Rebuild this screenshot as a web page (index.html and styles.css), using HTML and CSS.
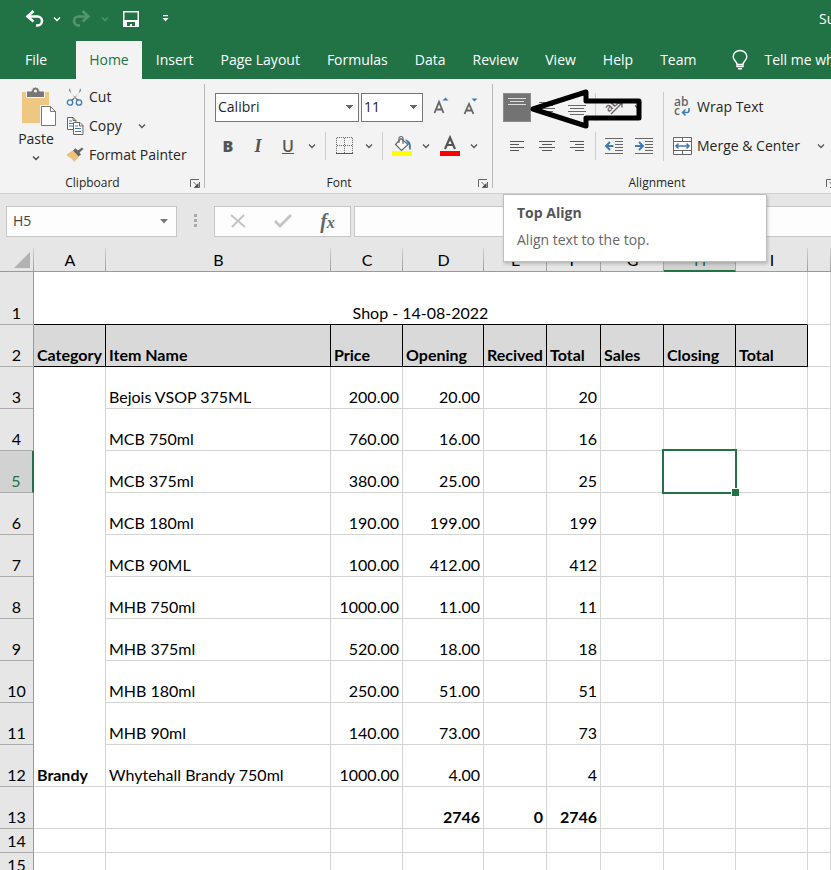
FILE: index.html
```html
<!DOCTYPE html>
<html lang="en">
<head>
<meta charset="utf-8">
<title>Shop stock sheet</title>
<link rel="stylesheet" href="styles.css">
</head>
<body>
<svg class="defs" aria-hidden="true">
  <symbol id="chev" viewBox="0 0 8 6"><path d="M1 1.500l3 3 3-3" fill="none" stroke="currentColor" stroke-width="1.300"/></symbol>
  <symbol id="launch" viewBox="0 0 10 9"><path d="M.5 8V.5H9M3.500 3l4 4M9.500 3v5.500H4" fill="none" stroke="#666"/><path d="M8.500 4v4h-4z" fill="#444"/></symbol>
</svg>

<header class="titlebar">
  <button class="qat undo" aria-label="Undo"><svg width="20" height="18" viewBox="0 0 20 18"><path d="M3 6.500h9.500a4.500 4.500 0 0 1 0 9H11" fill="none" stroke="#fff" stroke-width="2.600"/><path d="M8.500 1L2.500 6.500l6 5" fill="none" stroke="#fff" stroke-width="2.600"/></svg></button>
  <button class="qat drop" aria-label="Undo history"><svg width="8" height="6"><use href="#chev"/></svg></button>
  <button class="qat redo" aria-label="Redo"><svg width="20" height="18" viewBox="0 0 20 18"><path d="M17 6.500H7.500a4.500 4.500 0 0 0 0 9H9M11.500 1l6 5.500-6 5" fill="none" stroke="#549570" stroke-width="2.600"/></svg></button>
  <button class="qat drop dim" aria-label="Redo history"><svg width="8" height="6"><use href="#chev"/></svg></button>
  <button class="qat save" aria-label="Save"><svg width="16" height="16" viewBox="0 0 16 16"><path d="M0 0h16v16H0z" fill="#fff"/><path d="M1.500 1.500h13V9h-13zM4 11h8v4H9v-2H7v2H4z" fill="#217346"/></svg></button>
  <button class="qat more" aria-label="Customize toolbar"><svg width="7" height="7" viewBox="0 0 7 7"><path d="M1 0h5v1.200H1zM.5 3h6l-3 3.500z" fill="#fff"/></svg></button>
  <span class="doc">Su</span>
</header>

<nav class="tabs">
  <a class="tab file" href="#">File</a>
  <a class="tab on" href="#">Home</a>
  <a class="tab" href="#">Insert</a>
  <a class="tab" href="#">Page Layout</a>
  <a class="tab" href="#">Formulas</a>
  <a class="tab" href="#">Data</a>
  <a class="tab" href="#">Review</a>
  <a class="tab" href="#">View</a>
  <a class="tab" href="#">Help</a>
  <a class="tab" href="#">Team</a>
  <a class="tell" href="#"><svg width="16" height="20" viewBox="0 0 16 20"><path d="M5 14.500c0-3-3.800-4-3.800-7.700a6.800 6.300 0 0 1 13.600 0c0 3.700-3.800 4.700-3.800 7.700v2H5zM5 14.500h6M6 18.800h4" fill="none" stroke="#fff" stroke-width="1.400"/></svg>Tell me wh</a>
</nav>

<section class="ribbon">
  <div class="group">
    <div class="clip">
      <button class="paste"><svg width="36" height="40" viewBox="0 0 36 40"><path d="M4 5h27v31H4z" fill="#eec880"/><path d="M8.500 4h5a4 4 0 0 1 8 0h5v6.500h-18z" fill="#777" stroke="#f3f3f3"/><circle cx="17.500" cy="4" r="1.500" fill="#f3f3f3"/><path d="M23.500 19.500h9l5 5v14h-14z" fill="#fff" stroke="#f3f3f3" stroke-width="3"/><path d="M23.500 19.500h9l5 5v14h-14zM32.500 19.500v5h5" fill="#fff" stroke="#777"/></svg><span>Paste</span><svg width="8" height="6"><use href="#chev"/></svg></button>
      <div class="stack">
        <button class="cmd"><svg width="18" height="18" viewBox="0 0 18 18"><path d="M4 0c0 4 2 7 4.500 8.500L13 12l-1.500 1L3 2.500zM14 0c0 4-2 7-4.500 8.500L5 12l1.500 1L15 2.500z" fill="#666"/><circle cx="4" cy="14.500" r="2.700" fill="none" stroke="#3f7ab8" stroke-width="1.300"/><circle cx="13" cy="14.500" r="2.700" fill="none" stroke="#3f7ab8" stroke-width="1.300"/></svg>Cut</button>
        <div class="line"><button class="cmd"><svg width="18" height="18" viewBox="0 0 18 18"><path d="M1.500.5H7l3 3v9H1.500zM7 .5v3h3" fill="#fff" stroke="#666"/><path d="M3 4h3M3 6.500h4M3 9h4" stroke="#3f7ab8"/><path d="M7.500 5.500H14l3 3v9H7.500zM13.500 5.500v3.500H17" fill="#fff" stroke="#666"/><path d="M9 9h3M9 11.500h6M9 14.500h6" stroke="#3f7ab8"/></svg>Copy</button><button class="chev" aria-label="Copy options"><svg width="8" height="6"><use href="#chev"/></svg></button></div>
        <button class="cmd"><svg width="18" height="18" viewBox="0 0 18 18"><path d="M1 8l6-3.500L13 11l-5 5c-1.500-3-4-5-7-6z" fill="#eec27c"/><path d="M7 4.500l2.500-2.200 2.300 2.200L16 1.500 17.500 3l-4 3.500 1.500 2-2.500 2z" fill="#666"/></svg>Format Painter</button>
      </div>
    </div>
    <div class="caption"><span>Clipboard</span><button aria-label="Clipboard settings"><svg width="10" height="9"><use href="#launch"/></svg></button></div>
  </div>

  <div class="group font">
    <div class="rows">
      <div class="line pick">
        <select class="face" aria-label="Font"><option>Calibri</option></select>
        <select class="size" aria-label="Font size"><option>11</option></select>
        <button class="ico" aria-label="Increase font size"><svg width="20" height="20" viewBox="0 0 20 20"><path d="M4.500 16L9 5l4.500 11M6 12.500h6" fill="none" stroke="#666" stroke-width="1.800"/><path d="M12.500 3.500L15.500.5l3 3z" fill="#3f7ab8"/></svg></button>
        <button class="ico" aria-label="Decrease font size"><svg width="20" height="20" viewBox="0 0 20 20"><path d="M4.500 17L9 7l4.500 10M6 13.500h6" fill="none" stroke="#666" stroke-width="1.800"/><path d="M11.500 1.500l3 3 3-3z" fill="#3f7ab8"/></svg></button>
      </div>
      <div class="line">
        <button class="ico letter"><b>B</b></button>
        <button class="ico letter"><i>I</i></button>
        <button class="ico letter"><u>U</u></button>
        <button class="chev" aria-label="Underline options"><svg width="8" height="6"><use href="#chev"/></svg></button>
        <span class="bar"></span>
        <button class="ico" aria-label="Borders"><svg width="18" height="18" viewBox="0 0 18 18"><path d="M1 .5h16M1 8.500h16M.5 1v15M8.500 1v15M16.500 1v15" stroke="#666" stroke-dasharray="1 1"/><path d="M0 16.500h17" stroke="#555"/></svg></button>
        <button class="chev" aria-label="Border options"><svg width="8" height="6"><use href="#chev"/></svg></button>
        <span class="bar"></span>
        <button class="ico" aria-label="Fill color"><svg width="20" height="22" viewBox="0 0 20 22"><path d="M9 3.500l7 6-6.500 6-6-6z" fill="#fff" stroke="#666" stroke-width="1.200"/><path d="M7 8V3.500a2 2 0 0 1 4 0V9" fill="none" stroke="#666" stroke-width="1.200"/><path d="M13 4.500c4.500.5 7 4 5.500 10.500-1.500-.5-2-2-1.500-5z" fill="#3f7ab8"/><path d="M0 16h20v5H0z" fill="#ff0"/></svg></button>
        <button class="chev" aria-label="Fill options"><svg width="8" height="6"><use href="#chev"/></svg></button>
        <button class="ico" aria-label="Font color"><svg width="20" height="22" viewBox="0 0 20 22"><path d="M5 14L10 2.500 15 14M6.500 10h7" fill="none" stroke="#555" stroke-width="2.200"/><path d="M0 16h20v5H0z" fill="red"/></svg></button>
        <button class="chev" aria-label="Font color options"><svg width="8" height="6"><use href="#chev"/></svg></button>
      </div>
    </div>
    <div class="caption"><span>Font</span><button aria-label="Font settings"><svg width="10" height="9"><use href="#launch"/></svg></button></div>
  </div>

  <div class="group align">
    <div class="cols">
      <div class="rows">
        <div class="line">
          <button class="ico pressed" aria-label="Top Align"><svg width="18" height="18" viewBox="0 0 18 18"><path d="M0 .5h18M2 3.500h14M0 6.500h18" stroke="#ddd"/></svg></button>
          <button class="ico" aria-label="Middle Align"><svg width="18" height="18" viewBox="0 0 18 18"><path d="M1 4.500h16M3 7.500h12M1 10.500h16M3 13.500h12" stroke="#666"/></svg></button>
          <button class="ico" aria-label="Bottom Align"><svg width="18" height="18" viewBox="0 0 18 18"><path d="M0 7.500h18M2 10.500h14M0 13.500h18M2 16.500h14" stroke="#666"/></svg></button>
          <span class="bar"></span>
          <button class="ico" aria-label="Orientation"><svg width="22" height="20" viewBox="0 0 22 20"><text x="4" y="15" transform="rotate(-45 6 13)" class="ab">ab</text><path d="M8 17L19 6M14.500 6H19v4.500" fill="none" stroke="#666" stroke-width="1.400"/></svg></button>
          <button class="chev" aria-label="Orientation options"><svg width="8" height="6"><use href="#chev"/></svg></button>
        </div>
        <div class="line">
          <button class="ico" aria-label="Align left"><svg width="16" height="12" viewBox="0 0 16 12"><path d="M1 1.500h14M1 4.500h9M1 7.500h14M1 10.500h9" stroke="#555"/></svg></button>
          <button class="ico" aria-label="Center"><svg width="16" height="12" viewBox="0 0 16 12"><path d="M0 1.500h16M3 4.500h10M0 7.500h16M3 10.500h10" stroke="#555"/></svg></button>
          <button class="ico" aria-label="Align right"><svg width="16" height="12" viewBox="0 0 16 12"><path d="M1 1.500h14M6 4.500h9M1 7.500h14M6 10.500h9" stroke="#555"/></svg></button>
          <span class="bar"></span>
          <button class="ico" aria-label="Decrease indent"><svg width="18" height="16" viewBox="0 0 18 16"><path d="M0 .5h18M10 3.500h8M10 6.500h8M10 9.500h8M10 12.500h8M0 15.500h18" stroke="#666"/><path d="M8.500 8H2M5 4L1 8l4 4" fill="none" stroke="#3f7ab8" stroke-width="2"/></svg></button>
          <button class="ico" aria-label="Increase indent"><svg width="18" height="16" viewBox="0 0 18 16"><path d="M0 .5h18M10 3.500h8M10 6.500h8M10 9.500h8M10 12.500h8M0 15.500h18" stroke="#666"/><path d="M0 8h7M4 4l4 4-4 4" fill="none" stroke="#3f7ab8" stroke-width="2"/></svg></button>
        </div>
      </div>
      <div class="rows wraps">
        <button class="cmd"><svg width="20" height="20" viewBox="0 0 20 20"><text x="2" y="9" class="ab">ab</text><text x="2" y="18" class="ab">c</text><path d="M17 11v2.500q0 2-2 2h-4M13.500 12.500l-3 3 3 3" fill="none" stroke="#3f7ab8" stroke-width="1.500"/></svg>Wrap Text</button>
        <div class="line"><button class="cmd"><svg width="20" height="20" viewBox="0 0 20 20"><path d="M1.500 1.500h18v17h-18zM1.500 5.500h18M1.500 14.500h18M10.500 1.500v4M10.500 14.500v4" fill="#fff" stroke="#666"/><path d="M4 10h13M6.500 7.500L4 10l2.500 2.500M14.500 7.500L17 10l-2.500 2.500" fill="none" stroke="#3f7ab8" stroke-width="1.500"/></svg>Merge &amp; Center</button><button class="chev" aria-label="Merge options"><svg width="8" height="6"><use href="#chev"/></svg></button></div>
      </div>
    </div>
    <div class="caption"><span>Alignment</span><button aria-label="Alignment settings"><svg width="10" height="9"><use href="#launch"/></svg></button></div>
    <svg class="pointer" width="116" height="42" viewBox="0 0 116 42"><path d="M6 21L59 4v9h53v17H59v8z" fill="none" stroke="#000" stroke-width="5" stroke-linejoin="round"/></svg>
    <div class="tip" role="tooltip"><strong>Top Align</strong><span>Align text to the top.</span></div>
  </div>
</section>

<section class="formula">
  <div class="namebox"><input aria-label="Name box" value="H5"><svg width="8" height="5" viewBox="0 0 8 5"><path d="M0 0h8L4 4.500z" fill="#777"/></svg></div>
  <svg class="grip" width="3" height="14" viewBox="0 0 3 14"><path d="M0 0h3v3H0zM0 5h3v3H0zM0 10h3v3H0z" fill="#aaa"/></svg>
  <div class="fx">
    <button aria-label="Cancel"><svg width="16" height="14" viewBox="0 0 16 14"><path d="M1 1l14 12M14 1L2 13" stroke="#c4c4c4" stroke-width="2"/></svg></button>
    <button aria-label="Enter"><svg width="18" height="14" viewBox="0 0 18 14"><path d="M1 7l5 5L17 1" fill="none" stroke="#c4c4c4" stroke-width="2.800"/></svg></button>
    <button class="fn" aria-label="Insert function"><i>f<small>x</small></i></button>
  </div>
  <input class="entry" aria-label="Formula">
</section>

<main>
<table>
  <colgroup><col class="w34"><col class="w72"><col class="w225"><col class="w72"><col class="w81"><col class="w63"><col class="w54"><col class="w63"><col class="w72"><col class="w72"><col></colgroup>
  <thead><tr><th class="corner"><svg width="16" height="16" viewBox="0 0 16 16"><path d="M16 0v16H0z" fill="#b2b2b2"/></svg></th><th>A</th><th>B</th><th>C</th><th>D</th><th>E</th><th>F</th><th>G</th><th class="sel">H</th><th>I</th><th></th></tr></thead>
  <tbody>
    <tr class="first"><th>1</th><td class="title" colspan="9">Shop - 14-08-2022</td><td></td></tr>
    <tr class="heads"><th>2</th><td>Category</td><td>Item Name</td><td>Price</td><td>Opening</td><td>Recived</td><td>Total</td><td>Sales</td><td>Closing</td><td>Total</td><td></td></tr>
    <tr><th>3</th><td rowspan="10" class="strong">Brandy</td><td>Bejois VSOP 375ML</td><td class="n">200.00</td><td class="n">20.00</td><td></td><td class="n">20</td><td></td><td></td><td></td><td></td></tr>
    <tr><th>4</th><td>MCB 750ml</td><td class="n">760.00</td><td class="n">16.00</td><td></td><td class="n">16</td><td></td><td></td><td></td><td></td></tr>
    <tr><th class="sel">5</th><td>MCB 375ml</td><td class="n">380.00</td><td class="n">25.00</td><td></td><td class="n">25</td><td></td><td class="active"><span class="ring"></span></td><td></td><td></td></tr>
    <tr><th>6</th><td>MCB 180ml</td><td class="n">190.00</td><td class="n">199.00</td><td></td><td class="n">199</td><td></td><td></td><td></td><td></td></tr>
    <tr><th>7</th><td>MCB 90ML</td><td class="n">100.00</td><td class="n">412.00</td><td></td><td class="n">412</td><td></td><td></td><td></td><td></td></tr>
    <tr><th>8</th><td>MHB 750ml</td><td class="n">1000.00</td><td class="n">11.00</td><td></td><td class="n">11</td><td></td><td></td><td></td><td></td></tr>
    <tr><th>9</th><td>MHB 375ml</td><td class="n">520.00</td><td class="n">18.00</td><td></td><td class="n">18</td><td></td><td></td><td></td><td></td></tr>
    <tr><th>10</th><td>MHB 180ml</td><td class="n">250.00</td><td class="n">51.00</td><td></td><td class="n">51</td><td></td><td></td><td></td><td></td></tr>
    <tr><th>11</th><td>MHB 90ml</td><td class="n">140.00</td><td class="n">73.00</td><td></td><td class="n">73</td><td></td><td></td><td></td><td></td></tr>
    <tr><th>12</th><td>Whytehall Brandy 750ml</td><td class="n">1000.00</td><td class="n">4.00</td><td></td><td class="n">4</td><td></td><td></td><td></td><td></td></tr>
    <tr class="strong"><th>13</th><td></td><td></td><td></td><td class="n">2746</td><td class="n">0</td><td class="n">2746</td><td></td><td></td><td></td><td></td></tr>
    <tr class="short"><th>14</th><td></td><td></td><td></td><td></td><td></td><td></td><td></td><td></td><td></td><td></td></tr>
    <tr class="short"><th>15</th><td></td><td></td><td></td><td></td><td></td><td></td><td></td><td></td><td></td><td></td></tr>
  </tbody>
</table>
</main>
</body>
</html>
```
FILE: styles.css
```css
* { box-sizing: border-box; }
body {
  margin: 0;
  height: 100vh;
  overflow: hidden;
  display: flex;
  flex-direction: column;
  background: #fff;
  color: #262626;
  font: 14px/20px "Open Sans", "Noto Sans", sans-serif;
}
button { padding: 0; border: 0; background: none; color: inherit; font: inherit; display: flex; align-items: center; justify-content: center; flex: none; }
svg { flex: none; display: block; overflow: visible; }
.defs { position: absolute; width: 0; height: 0; }

.titlebar { display: flex; align-items: center; flex: none; height: 41px; padding: 0 0 4px 21px; background: #217346; color: #fff; }
.qat { height: 28px; width: 28px; }
.drop { width: 16px; }
.dim { color: #549570; }
.redo { width: 32px; }
.save { margin-left: 4px; }
.more { margin-left: 6px; }
.doc { margin-left: auto; width: 12px; white-space: nowrap; }

.tabs { display: flex; flex: none; height: 38px; background: #217346; overflow: hidden; white-space: nowrap; }
.tabs a { color: #fff; text-decoration: none; line-height: 38px; flex: none; }
.tabs .tab { padding: 0 13px 0 14px; }
.tabs .file { padding: 0 29px 0 25px; }
.tabs .on { padding: 0 13px; background: #f3f3f3; color: #217346; }
.tabs .tell { display: flex; align-items: center; gap: 16px; padding-left: 23px; }

.ribbon { display: flex; flex: none; height: 115px; background: #f3f3f3; border-bottom: 1px solid #d0d0d0; position: relative; z-index: 2; }
.group { position: relative; flex: none; width: 205px; display: flex; flex-direction: column; justify-content: space-between; }
.group::after { content: ""; position: absolute; right: 0; top: 5px; bottom: 5px; width: 1px; background: #b8b8b8; }
.font { width: 288px; }
.align { width: 348px; }
.caption { display: flex; height: 20px; font-size: 12px; }
.caption span { flex: 1; text-align: center; }
.caption button { width: 20px; }
.clip { display: flex; padding: 3px 0 0 18px; }
.paste { flex-direction: column; justify-content: flex-start; width: 36px; padding-top: 5px; margin-right: 12px; gap: 2px; color: #444; }
.paste span { color: #262626; }
.paste svg:last-child { margin-top: 4px; }
.cmd { gap: 5px; height: 29px; white-space: nowrap; }
.line { display: flex; align-items: center; height: 30px; }
.stack .line { height: 29px; }
.stack .chev { margin-left: 11px; }
.rows { display: flex; flex-direction: column; gap: 9px; padding: 13px 0 0 8px; }
.ico { width: 30px; height: 30px; color: #555; }
.letter { font-size: 16px; font-weight: 600; }
.letter i { font-family: "Liberation Serif", serif; font-size: 18px; font-weight: 700; }
.chev { width: 18px; height: 28px; color: #555; }
.bar { width: 1px; height: 28px; margin: 0 3px; background: #ccc; }
.font .bar { margin: 0 4px; }
.pick { gap: 2px; padding-left: 2px; }
.pick .ico + .ico { margin-left: -2px; }
select {
  height: 29px;
  padding: 0 0 0 2px;
  border: 1px solid #777;
  border-radius: 0;
  appearance: none;
  color: #262626;
  font: inherit;
  background-color: #fff;
  background-image: linear-gradient(to bottom left, #666 50%, transparent 50%), linear-gradient(to bottom right, #666 50%, transparent 50%);
  background-size: 4px 4px;
  background-position: right 8px center, right 4px center;
  background-repeat: no-repeat;
}
.face { width: 144px; }
.size { width: 62px; }

.cols { display: flex; }
.align .rows { padding-left: 9px; }
.pressed { width: 28px; height: 29px; margin: 0 1px; background: #737373; border: 1px solid #8c8c8c; align-items: flex-start; padding-top: 4px; }
.cols .wraps { margin: 0 0 0 4px; position: relative; }
.wraps::before { content: ""; position: absolute; left: 0; top: 13px; width: 1px; height: 69px; background: #ccc; }
.wraps .cmd { gap: 5px; height: 30px; align-self: flex-start; }
.wraps .chev { margin-left: 12px; }
.ab { font: 600 12px "Open Sans", sans-serif; fill: #666; }
.pointer { position: absolute; left: 34px; top: 9px; }
.tip {
  position: absolute; left: 10px; top: 115px; width: 264px; height: 68px; padding: 8px 13px; display: flex; flex-direction: column; gap: 7px;
  background: #fff; border: 1px solid #bebebe; color: #666; box-shadow: 1px 2px 3px rgba(0, 0, 0, .2); white-space: nowrap;
}
.tip strong { color: #555; }

.formula { display: flex; align-items: center; flex: none; height: 54px; padding-left: 6px; background: #e6e6e6; }
.namebox, .fx, .entry { height: 31px; background: #fdfdfd; border: 1px solid #c6c6c6; }
.namebox { width: 171px; display: flex; align-items: center; padding-right: 8px; }
.namebox input { flex: 1; min-width: 0; border: 0; padding: 0 0 0 6px; background: none; color: #444; font: inherit; }
.grip { margin: 0 17px; }
.fx { width: 137px; display: flex; }
.fx button { width: 45px; }
.fn i { font: italic 700 20px "Liberation Serif", serif; color: #666; }
.fn small { font-size: 16px; }
.entry { flex: 1; min-width: 0; margin-left: 3px; border-right: 0; padding: 0 6px; font: inherit; }

main { flex: 1; min-height: 0; overflow: hidden; }
table { width: 100%; table-layout: fixed; border-collapse: separate; border-spacing: 0; color: #000; font: 16px/20px Lato, sans-serif; }
.w34 { width: 34px; }
.w54 { width: 54px; }
.w63 { width: 63px; }
.w72 { width: 72px; }
.w81 { width: 81px; }
.w225 { width: 225px; }
th, td { height: 42px; padding: 0 3px 1px; vertical-align: bottom; white-space: nowrap; border: 0 solid #d4d4d4; border-width: 0 1px 1px 0; text-align: left; }
th { background: #e6e6e6; border-color: #ababab; text-align: center; font-weight: 400; }
tbody th { border-right-color: #999; }
thead th { height: 24px; padding: 0 2px 1px 3px; border-bottom-color: #999; border-image: linear-gradient(#d4d4d4, #999) 1; }
.corner svg { margin: 0 0 2px 11px; }
thead .sel { background: #d2d2d2; color: #217346; border-image: none; border-bottom: 2px solid #217346; padding-bottom: 0; }
tbody .sel { background: #d2d2d2; color: #217346; border-right: 2px solid #217346; }
.first td { height: 53px; }
.title { text-align: center; border-bottom-color: #000; }
.heads td:not(:last-child) { background: #d9d9d9; border-color: #000; font-weight: 700; }
.n { text-align: right; }
.strong, .strong td { font-weight: 700; }
.short th, .short td { height: 24px; }
.active { position: relative; }
.ring { position: absolute; inset: -2px; border: 2px solid #217346; }
.ring::after { content: ""; position: absolute; right: -4px; bottom: -4px; width: 7px; height: 7px; background: #217346; border: solid #fff; border-width: 1px 0 0 1px; }
```
